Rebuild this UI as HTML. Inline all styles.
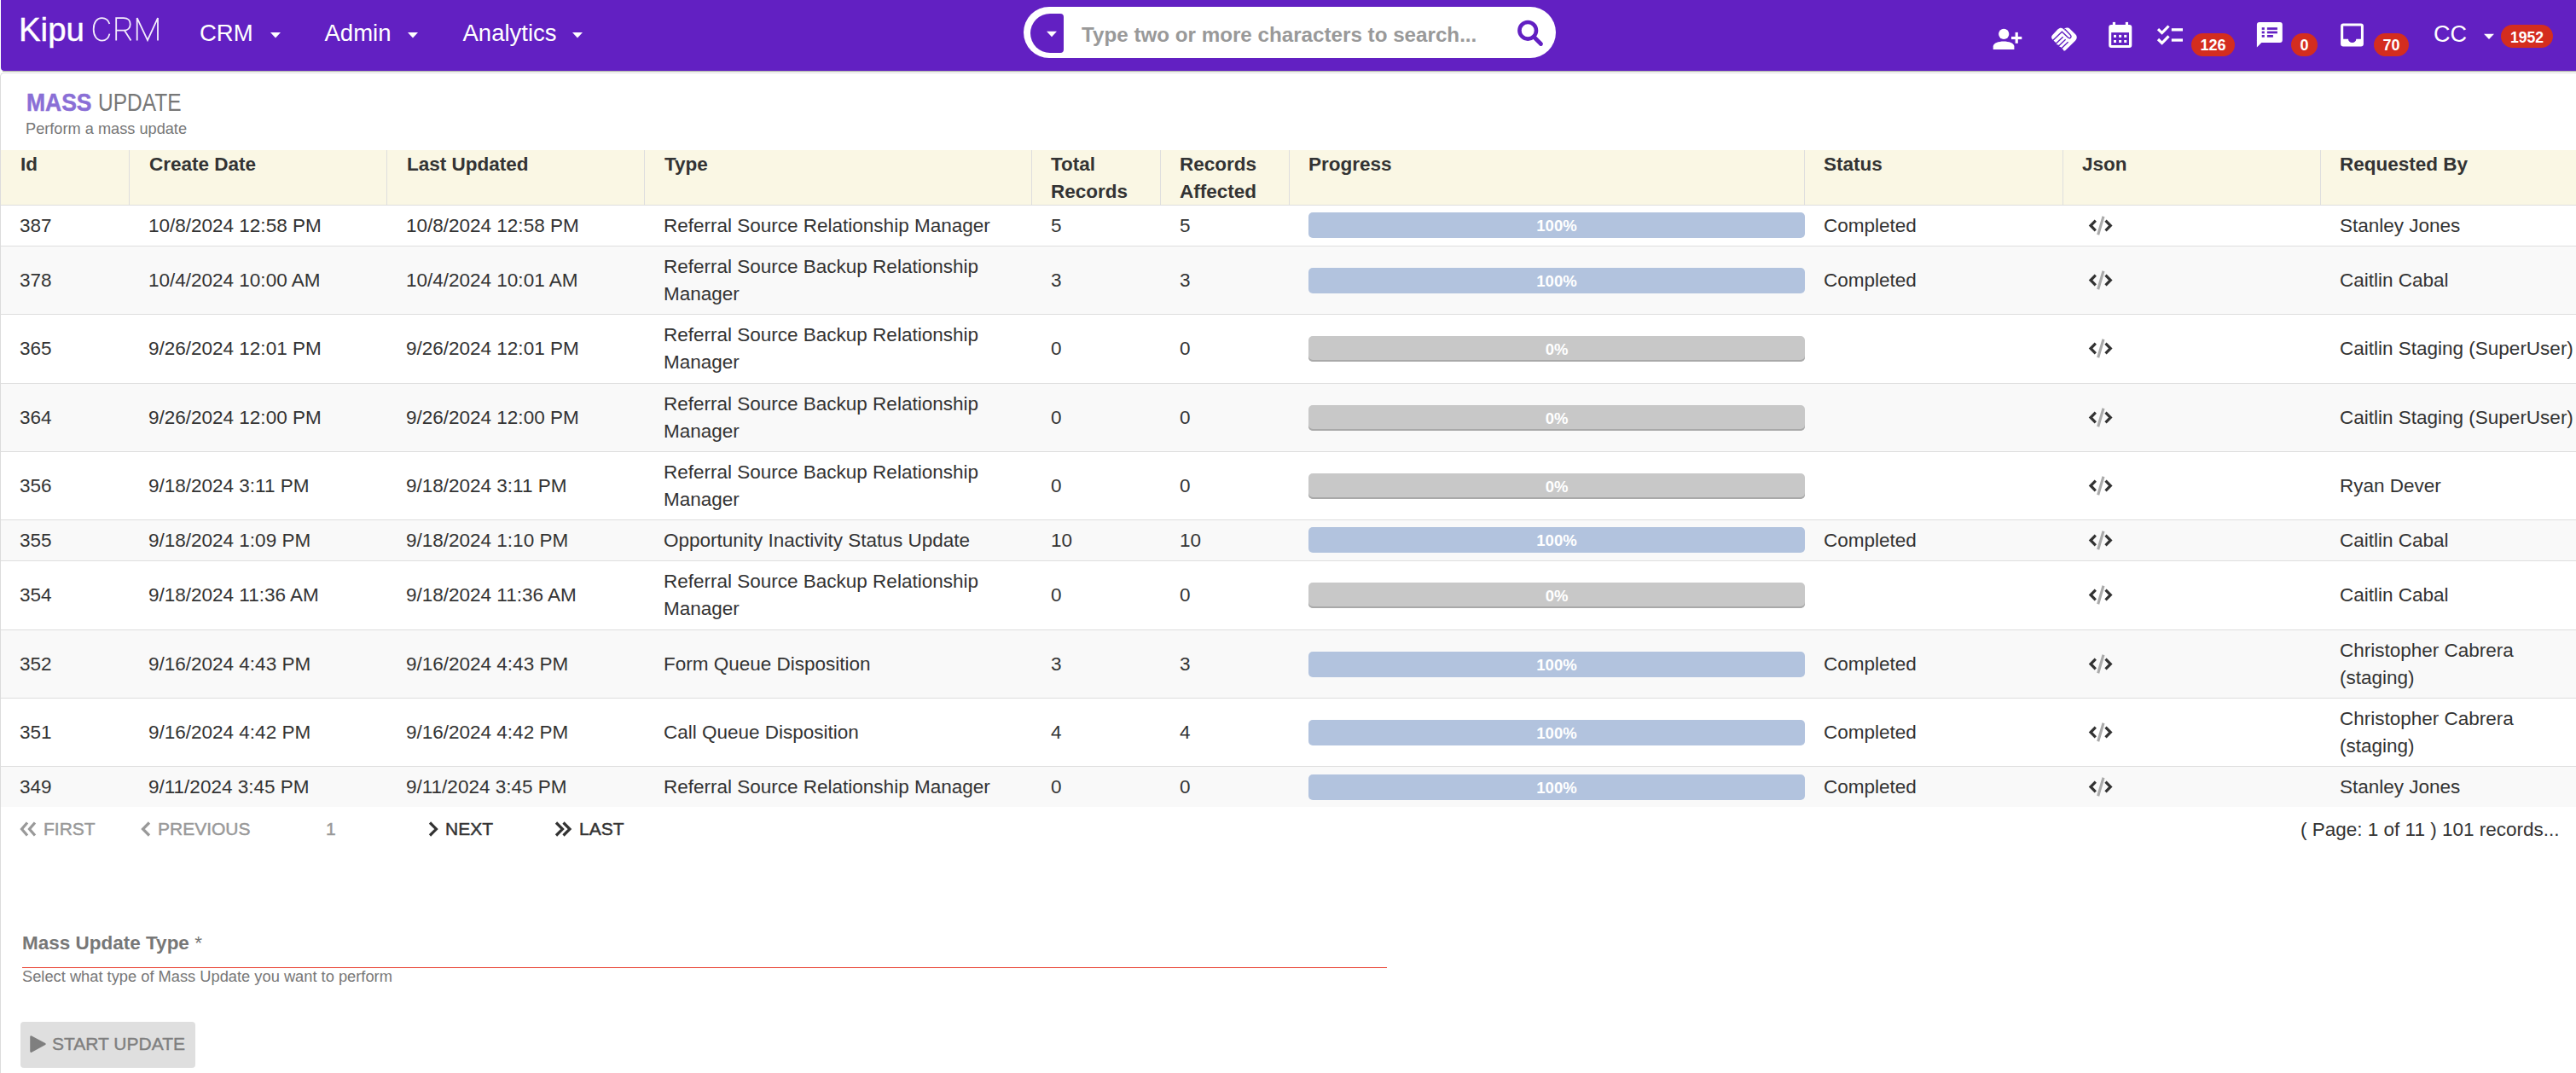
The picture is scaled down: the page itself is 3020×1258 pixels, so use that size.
<!DOCTYPE html>
<html><head><meta charset="utf-8">
<style>
*{box-sizing:border-box}
html,body{margin:0;padding:0}
body{width:3020px;height:1258px;overflow:hidden;background:#fff;position:relative;font-family:"Liberation Sans",sans-serif;color:#333}
.a{position:absolute;white-space:nowrap}
#nav{position:absolute;left:1px;top:0;width:3019px;height:83px;background:#6220c2;border-bottom-left-radius:4px}
.menu{color:#fff;font-size:27.5px;line-height:40px}
.badge{position:absolute;height:27px;border-radius:14px;background:#d42d1f;color:#fff;font-weight:700;font-size:18px;line-height:27px;text-align:center}
#card{position:absolute;left:0;top:85px;width:3030px;height:1200px;border-top:1.5px solid #dcdcdc;border-left:1.5px solid #dcdcdc;border-top-left-radius:5px}
.row{position:absolute;left:1px;width:3019px;border-bottom:1px solid #dedede}
.row.alt{background:#f9f9f9}
.c{position:absolute;top:0;bottom:0;display:flex;align-items:center;font-size:22.5px;line-height:32px;color:#333;white-space:nowrap}
.hd{position:absolute;left:1px;top:176px;width:3019px;height:65px;background:#faf7e4;border-bottom:1px solid #dedede}
.hc{position:absolute;top:1px;font-size:22.5px;line-height:32px;font-weight:700;color:#333;white-space:nowrap}
.vl{position:absolute;top:0;width:1px;height:64px;background:#dedede}
.bar{position:absolute;left:1533px;width:582px;height:30px;border-radius:5px;color:#fff;font-weight:700;font-size:18.5px;line-height:32px;text-align:center}
.blue{background:#b2c3de}
.gray{background:#c8c8c8;box-shadow:inset 0 -2px 0 #a9a9a9}
.pg{font-size:21px;line-height:32px;-webkit-text-stroke:0.45px currentColor}
</style></head><body>

<div id="nav"></div>
<div class="a" style="left:3px;top:83px;width:3017px;height:1px;background:#a9ada3"></div>
<!-- logo -->
<div class="a" style="left:21.5px;top:15px;font-size:39px;line-height:40px;color:#fff;-webkit-text-stroke:0.4px #fff;transform:scaleX(0.985);transform-origin:0 0">Kipu</div>
<svg class="a" style="left:0;top:0" width="3020" height="83" viewBox="0 0 3020 83">
  <g fill="none" stroke="#f4eefc" stroke-width="1.8">
    <path d="M128.4,28 C127,23.6 123.8,21.1 119.6,21.1 C113.4,21.1 109.7,26.6 109.7,34.3 C109.7,42 113.4,47.6 119.6,47.6 C124,47.6 127.2,44.8 128.5,39.6"/>
    <path d="M136.2,47.6 V21.2 H145 C150,21.2 152.7,24.3 152.7,28.4 C152.7,32.6 150,35.7 145,35.7 H136.2 M146,35.7 L153.5,47.6"/>
    <path d="M160.7,47.6 V21.1 L173,47.2 L185,21.1 V47.6"/>
  </g>
</svg>
<div class="a menu" style="left:234px;top:19px">CRM</div>
<div class="a menu" style="left:380.5px;top:19px">Admin</div>
<div class="a menu" style="left:542.5px;top:19px">Analytics</div>
<svg class="a" style="left:0;top:0" width="3020" height="83" viewBox="0 0 3020 83">
  <g fill="#fff">
    <path d="M317,38 H329 L323,44.5 Z"/>
    <path d="M478,38 H490 L484,44.5 Z"/>
    <path d="M671,38 H683 L677,44.5 Z"/>
    <path d="M2912,39.8 H2924 L2918,46 Z"/>
  </g>
</svg>
<!-- search -->
<div class="a" style="left:1200px;top:8px;width:624px;height:60px;border-radius:30px;background:#fff"></div>
<div class="a" style="left:1208px;top:16px;width:39px;height:46px;background:#6220c2;border-radius:23px 4px 4px 23px / 23px 4px 4px 23px"></div>
<svg class="a" style="left:0;top:0" width="3020" height="83" viewBox="0 0 3020 83">
  <path d="M1227,36.8 H1239 L1233,43.2 Z" fill="#fff"/>
  <circle cx="1791.2" cy="35.8" r="9.8" fill="none" stroke="#6220c2" stroke-width="4.6"/>
  <path d="M1799.5,44.5 L1806.5,51.5" stroke="#6220c2" stroke-width="4.8" stroke-linecap="round"/>
</svg>
<div class="a" style="left:1268px;top:21px;font-size:24.2px;line-height:40px;font-weight:700;color:#999">Type two or more characters to search...</div>

<!-- nav icons -->
<svg class="a" style="left:0;top:0" width="3020" height="83" viewBox="0 0 3020 83">
  <g fill="#fff">
    <!-- person add -->
    <circle cx="2349.2" cy="39.9" r="6.1"/>
    <path d="M2336.7,58 V54.6 C2336.7,50.6 2343,48.6 2349,48.6 C2355,48.6 2361.4,50.6 2361.4,54.6 V58 Z"/>
    <rect x="2358" y="42.9" width="12.3" height="3.2"/>
    <rect x="2362.6" y="37.9" width="3.2" height="12.9"/>
    <!-- handshake -->
    <g transform="translate(2400,28)">
      <path d="M6,13.2 L12.6,6.3 C14.8,4.2 17,4.2 19,6 L21.5,8.3 L20.2,5.8 C22,4.2 24.8,4.2 26.8,6 L33,12 C35.4,14.3 35.4,17.4 33,19.7 L21.2,31.2 C20,32.2 18.6,31.2 18.9,29.8 C17.7,29.6 16.3,28.6 16.3,27.3 C15,27.2 13.4,26.2 13.3,24.6 C11.8,24.6 10.3,23.6 10.1,22 L7.2,19.2 C4.8,17.4 4.4,14.9 6,13.2 Z"/>
    </g>
    <!-- calendar -->
    <rect x="2472.2" y="28.9" width="27.1" height="27" rx="3"/>
    <rect x="2476.8" y="25.9" width="3.2" height="4"/>
    <rect x="2491.8" y="25.9" width="3.2" height="4"/>
    <!-- checklist -->
    <rect x="2545.8" y="33.2" width="13.2" height="3.3"/>
    <rect x="2545.8" y="45.4" width="13.2" height="3.3"/>
    <!-- comment -->
    <rect x="2645.9" y="25.9" width="29.9" height="24" rx="3"/>
    <path d="M2645.9,47 V55.4 L2651.8,49.6 Z"/>
    <!-- inbox -->
    <rect x="2744.1" y="27.4" width="26.8" height="27.2" rx="3"/>
  </g>
  <g fill="#6220c2">
    <rect x="2475.2" y="38.1" width="20.8" height="14.9"/>
    <rect x="2651.7" y="32.2" width="3.1" height="2.7"/><rect x="2657.9" y="32.2" width="12" height="2.7"/>
    <rect x="2651.7" y="36.6" width="3.1" height="2.7"/><rect x="2657.9" y="36.6" width="12" height="2.7"/>
    <rect x="2651.7" y="41" width="3.1" height="2.7"/><rect x="2657.9" y="41" width="7" height="2.7"/>
    <path d="M2747.2,30.5 H2767.9 V45.7 H2762.3 A4.65,4.3 0 0 1 2753,45.7 H2747.2 Z"/>
  </g>
  <g fill="#fff">
    <rect x="2478" y="40.9" width="3" height="3"/><rect x="2484.1" y="40.9" width="3" height="3"/><rect x="2490.2" y="40.9" width="3" height="3"/>
    <rect x="2478" y="47" width="3" height="3"/><rect x="2484.1" y="47" width="3" height="3"/><rect x="2490.2" y="47" width="3" height="3"/>
  </g>
  <g fill="none" stroke="#fff" stroke-width="3.2">
    <path d="M2530,34.1 L2534.6,38.6 L2542.5,30.5"/>
    <path d="M2530,46 L2534.6,50.5 L2542.5,42.4"/>
  </g>
  <g fill="none" stroke="#6220c2" stroke-width="1.4" transform="translate(2400,28)">
    <path d="M6.6,19.5 L17.4,9.2 L24.2,15.8 C25.6,17.2 27.6,17 28,15.2 C28.2,14.4 27.8,13.6 27.2,13 L20.8,6.2"/>
    <path d="M18.6,15.3 L10.2,23.2"/>
    <path d="M21.6,18.3 L13.2,26.2"/>
    <path d="M24.6,21.3 L16.2,29.2"/>
  </g>
</svg>
<div class="badge" style="left:2569px;top:39px;width:51px;padding-top:1px">126</div>
<div class="badge" style="left:2686px;top:39px;width:31px;padding-top:1px">0</div>
<div class="badge" style="left:2783px;top:39px;width:41px;padding-top:1px">70</div>
<div class="a menu" style="left:2853px;top:20px;font-size:27px">CC</div>
<div class="badge" style="left:2932px;top:29px;width:61px;padding-top:2px;font-size:17.6px">1952</div>

<!-- card -->
<div id="card"></div>
<div class="a" style="left:31px;top:100px;font-size:28.8px;line-height:40px;font-weight:700;color:#8a6fd6;-webkit-text-stroke:0.5px #8a6fd6;transform:scaleX(0.92);transform-origin:0 0">MASS</div>
<div class="a" style="left:115px;top:100px;font-size:28.8px;line-height:40px;color:#777;transform:scaleX(0.85);transform-origin:0 0">UPDATE</div>
<div class="a" style="left:30px;top:135px;font-size:18.2px;line-height:32px;color:#777">Perform a mass update</div>

<!-- table header -->
<div class="hd">
  <div class="vl" style="left:150px"></div>
  <div class="vl" style="left:452px"></div>
  <div class="vl" style="left:754px"></div>
  <div class="vl" style="left:1208px"></div>
  <div class="vl" style="left:1359px"></div>
  <div class="vl" style="left:1510px"></div>
  <div class="vl" style="left:2114px"></div>
  <div class="vl" style="left:2417px"></div>
  <div class="vl" style="left:2719px"></div>
  <div class="hc" style="left:23px">Id</div>
  <div class="hc" style="left:174px">Create Date</div>
  <div class="hc" style="left:476px">Last Updated</div>
  <div class="hc" style="left:778px">Type</div>
  <div class="hc" style="left:1231px">Total<br>Records</div>
  <div class="hc" style="left:1382px">Records<br>Affected</div>
  <div class="hc" style="left:1533px">Progress</div>
  <div class="hc" style="left:2137px">Status</div>
  <div class="hc" style="left:2440px">Json</div>
  <div class="hc" style="left:2742px">Requested By</div>
</div>

<div id="rows"><div class="row" style="top:241px;height:48px;"><div class="c" style="left:22px"><div>387</div></div><div class="c" style="left:173px"><div>10/8/2024 12:58 PM</div></div><div class="c" style="left:475px"><div>10/8/2024 12:58 PM</div></div><div class="c" style="left:777px"><div>Referral Source Relationship Manager</div></div><div class="c" style="left:1231px"><div>5</div></div><div class="c" style="left:1382px"><div>5</div></div><div class="bar blue" style="top:8px">100%</div><div class="c" style="left:2137px"><div>Completed</div></div><svg style="position:absolute;left:2439px;top:9.5px" width="42" height="28" viewBox="0 0 42 28"><path d="M16.8,7.7 L11,13.5 L16.8,19.3 M28.5,7.7 L34.3,13.5 L28.5,19.3" fill="none" stroke="#333" stroke-width="3.2"></path><path d="M26,2.8 L19.7,24.3" stroke="#aaa" stroke-width="3.1"></path></svg><div class="c" style="left:2742px"><div>Stanley Jones</div></div></div>
<div class="row alt" style="top:289px;height:80px;"><div class="c" style="left:22px"><div>378</div></div><div class="c" style="left:173px"><div>10/4/2024 10:00 AM</div></div><div class="c" style="left:475px"><div>10/4/2024 10:01 AM</div></div><div class="c" style="left:777px"><div>Referral Source Backup Relationship<br>Manager</div></div><div class="c" style="left:1231px"><div>3</div></div><div class="c" style="left:1382px"><div>3</div></div><div class="bar blue" style="top:25px">100%</div><div class="c" style="left:2137px"><div>Completed</div></div><svg style="position:absolute;left:2439px;top:25.5px" width="42" height="28" viewBox="0 0 42 28"><path d="M16.8,7.7 L11,13.5 L16.8,19.3 M28.5,7.7 L34.3,13.5 L28.5,19.3" fill="none" stroke="#333" stroke-width="3.2"></path><path d="M26,2.8 L19.7,24.3" stroke="#aaa" stroke-width="3.1"></path></svg><div class="c" style="left:2742px"><div>Caitlin Cabal</div></div></div>
<div class="row" style="top:369px;height:81px;"><div class="c" style="left:22px"><div>365</div></div><div class="c" style="left:173px"><div>9/26/2024 12:01 PM</div></div><div class="c" style="left:475px"><div>9/26/2024 12:01 PM</div></div><div class="c" style="left:777px"><div>Referral Source Backup Relationship<br>Manager</div></div><div class="c" style="left:1231px"><div>0</div></div><div class="c" style="left:1382px"><div>0</div></div><div class="bar gray" style="top:25px">0%</div><div class="c" style="left:2137px"><div></div></div><svg style="position:absolute;left:2439px;top:26px" width="42" height="28" viewBox="0 0 42 28"><path d="M16.8,7.7 L11,13.5 L16.8,19.3 M28.5,7.7 L34.3,13.5 L28.5,19.3" fill="none" stroke="#333" stroke-width="3.2"></path><path d="M26,2.8 L19.7,24.3" stroke="#aaa" stroke-width="3.1"></path></svg><div class="c" style="left:2742px"><div>Caitlin Staging (SuperUser)</div></div></div>
<div class="row alt" style="top:450px;height:80px;"><div class="c" style="left:22px"><div>364</div></div><div class="c" style="left:173px"><div>9/26/2024 12:00 PM</div></div><div class="c" style="left:475px"><div>9/26/2024 12:00 PM</div></div><div class="c" style="left:777px"><div>Referral Source Backup Relationship<br>Manager</div></div><div class="c" style="left:1231px"><div>0</div></div><div class="c" style="left:1382px"><div>0</div></div><div class="bar gray" style="top:25px">0%</div><div class="c" style="left:2137px"><div></div></div><svg style="position:absolute;left:2439px;top:25.5px" width="42" height="28" viewBox="0 0 42 28"><path d="M16.8,7.7 L11,13.5 L16.8,19.3 M28.5,7.7 L34.3,13.5 L28.5,19.3" fill="none" stroke="#333" stroke-width="3.2"></path><path d="M26,2.8 L19.7,24.3" stroke="#aaa" stroke-width="3.1"></path></svg><div class="c" style="left:2742px"><div>Caitlin Staging (SuperUser)</div></div></div>
<div class="row" style="top:530px;height:80px;"><div class="c" style="left:22px"><div>356</div></div><div class="c" style="left:173px"><div>9/18/2024 3:11 PM</div></div><div class="c" style="left:475px"><div>9/18/2024 3:11 PM</div></div><div class="c" style="left:777px"><div>Referral Source Backup Relationship<br>Manager</div></div><div class="c" style="left:1231px"><div>0</div></div><div class="c" style="left:1382px"><div>0</div></div><div class="bar gray" style="top:25px">0%</div><div class="c" style="left:2137px"><div></div></div><svg style="position:absolute;left:2439px;top:25.5px" width="42" height="28" viewBox="0 0 42 28"><path d="M16.8,7.7 L11,13.5 L16.8,19.3 M28.5,7.7 L34.3,13.5 L28.5,19.3" fill="none" stroke="#333" stroke-width="3.2"></path><path d="M26,2.8 L19.7,24.3" stroke="#aaa" stroke-width="3.1"></path></svg><div class="c" style="left:2742px"><div>Ryan Dever</div></div></div>
<div class="row alt" style="top:610px;height:48px;"><div class="c" style="left:22px"><div>355</div></div><div class="c" style="left:173px"><div>9/18/2024 1:09 PM</div></div><div class="c" style="left:475px"><div>9/18/2024 1:10 PM</div></div><div class="c" style="left:777px"><div>Opportunity Inactivity Status Update</div></div><div class="c" style="left:1231px"><div>10</div></div><div class="c" style="left:1382px"><div>10</div></div><div class="bar blue" style="top:8px">100%</div><div class="c" style="left:2137px"><div>Completed</div></div><svg style="position:absolute;left:2439px;top:9.5px" width="42" height="28" viewBox="0 0 42 28"><path d="M16.8,7.7 L11,13.5 L16.8,19.3 M28.5,7.7 L34.3,13.5 L28.5,19.3" fill="none" stroke="#333" stroke-width="3.2"></path><path d="M26,2.8 L19.7,24.3" stroke="#aaa" stroke-width="3.1"></path></svg><div class="c" style="left:2742px"><div>Caitlin Cabal</div></div></div>
<div class="row" style="top:658px;height:81px;"><div class="c" style="left:22px"><div>354</div></div><div class="c" style="left:173px"><div>9/18/2024 11:36 AM</div></div><div class="c" style="left:475px"><div>9/18/2024 11:36 AM</div></div><div class="c" style="left:777px"><div>Referral Source Backup Relationship<br>Manager</div></div><div class="c" style="left:1231px"><div>0</div></div><div class="c" style="left:1382px"><div>0</div></div><div class="bar gray" style="top:25px">0%</div><div class="c" style="left:2137px"><div></div></div><svg style="position:absolute;left:2439px;top:26px" width="42" height="28" viewBox="0 0 42 28"><path d="M16.8,7.7 L11,13.5 L16.8,19.3 M28.5,7.7 L34.3,13.5 L28.5,19.3" fill="none" stroke="#333" stroke-width="3.2"></path><path d="M26,2.8 L19.7,24.3" stroke="#aaa" stroke-width="3.1"></path></svg><div class="c" style="left:2742px"><div>Caitlin Cabal</div></div></div>
<div class="row alt" style="top:739px;height:80px;"><div class="c" style="left:22px"><div>352</div></div><div class="c" style="left:173px"><div>9/16/2024 4:43 PM</div></div><div class="c" style="left:475px"><div>9/16/2024 4:43 PM</div></div><div class="c" style="left:777px"><div>Form Queue Disposition</div></div><div class="c" style="left:1231px"><div>3</div></div><div class="c" style="left:1382px"><div>3</div></div><div class="bar blue" style="top:25px">100%</div><div class="c" style="left:2137px"><div>Completed</div></div><svg style="position:absolute;left:2439px;top:25.5px" width="42" height="28" viewBox="0 0 42 28"><path d="M16.8,7.7 L11,13.5 L16.8,19.3 M28.5,7.7 L34.3,13.5 L28.5,19.3" fill="none" stroke="#333" stroke-width="3.2"></path><path d="M26,2.8 L19.7,24.3" stroke="#aaa" stroke-width="3.1"></path></svg><div class="c" style="left:2742px"><div>Christopher Cabrera<br>(staging)</div></div></div>
<div class="row" style="top:819px;height:80px;"><div class="c" style="left:22px"><div>351</div></div><div class="c" style="left:173px"><div>9/16/2024 4:42 PM</div></div><div class="c" style="left:475px"><div>9/16/2024 4:42 PM</div></div><div class="c" style="left:777px"><div>Call Queue Disposition</div></div><div class="c" style="left:1231px"><div>4</div></div><div class="c" style="left:1382px"><div>4</div></div><div class="bar blue" style="top:25px">100%</div><div class="c" style="left:2137px"><div>Completed</div></div><svg style="position:absolute;left:2439px;top:25.5px" width="42" height="28" viewBox="0 0 42 28"><path d="M16.8,7.7 L11,13.5 L16.8,19.3 M28.5,7.7 L34.3,13.5 L28.5,19.3" fill="none" stroke="#333" stroke-width="3.2"></path><path d="M26,2.8 L19.7,24.3" stroke="#aaa" stroke-width="3.1"></path></svg><div class="c" style="left:2742px"><div>Christopher Cabrera<br>(staging)</div></div></div>
<div class="row alt" style="top:899px;height:47px;border-bottom:none;"><div class="c" style="left:22px"><div>349</div></div><div class="c" style="left:173px"><div>9/11/2024 3:45 PM</div></div><div class="c" style="left:475px"><div>9/11/2024 3:45 PM</div></div><div class="c" style="left:777px"><div>Referral Source Relationship Manager</div></div><div class="c" style="left:1231px"><div>0</div></div><div class="c" style="left:1382px"><div>0</div></div><div class="bar blue" style="top:9px">100%</div><div class="c" style="left:2137px"><div>Completed</div></div><svg style="position:absolute;left:2439px;top:9.5px" width="42" height="28" viewBox="0 0 42 28"><path d="M16.8,7.7 L11,13.5 L16.8,19.3 M28.5,7.7 L34.3,13.5 L28.5,19.3" fill="none" stroke="#333" stroke-width="3.2"></path><path d="M26,2.8 L19.7,24.3" stroke="#aaa" stroke-width="3.1"></path></svg><div class="c" style="left:2742px"><div>Stanley Jones</div></div></div></div>

<!-- pagination -->
<svg class="a" style="left:0;top:950px" width="800" height="50" viewBox="0 950 800 50">
  <g fill="none" stroke-width="3.2" stroke-linejoin="miter">
    <path d="M32,964.5 L25.5,972 L32,979.5 M41,964.5 L34.5,972 L41,979.5" stroke="#999"/>
    <path d="M175,964.5 L167.5,972 L175,979.5" stroke="#999"/>
    <path d="M504,964.5 L511.5,972 L504,979.5" stroke="#333"/>
    <path d="M652,964.5 L659.5,972 L652,979.5 M660.5,964.5 L668,972 L660.5,979.5" stroke="#333"/>
  </g>
</svg>
<div class="a pg" style="left:51px;top:956px;color:#999">FIRST</div>
<div class="a pg" style="left:185px;top:956px;color:#999">PREVIOUS</div>
<div class="a pg" style="left:382px;top:956px;color:#999">1</div>
<div class="a pg" style="left:522px;top:956px;color:#333">NEXT</div>
<div class="a pg" style="left:679px;top:956px;color:#333">LAST</div>
<div class="a" style="left:2697px;top:957px;font-size:22.5px;line-height:32px;color:#333">( Page: 1 of 11 ) 101 records...</div>

<!-- form -->
<div class="a" style="left:26px;top:1090px;font-size:22.5px;line-height:32px;font-weight:700;color:#777">Mass Update Type <span style="font-weight:400">*</span></div>
<div class="a" style="left:26px;top:1133.8px;width:1600px;height:1.4px;background:#e8392a"></div>
<div class="a" style="left:26px;top:1129px;font-size:18.3px;line-height:32px;color:#777">Select what type of Mass Update you want to perform</div>
<div class="a" style="left:24px;top:1198px;width:205px;height:54px;background:#dfdfdf;border-radius:4px"></div>
<svg class="a" style="left:30px;top:1208px" width="30" height="32" viewBox="30 1208 30 32">
  <path d="M36.5,1215.5 L52.5,1224 L36.5,1232.6 Z" fill="#7f7f7f" stroke="#7f7f7f" stroke-width="2.5" stroke-linejoin="round"/>
</svg>
<div class="a" style="left:61px;top:1208px;font-size:21px;line-height:32px;color:#7f7f7f;-webkit-text-stroke:0.4px #7f7f7f">START UPDATE</div>

</body></html>
